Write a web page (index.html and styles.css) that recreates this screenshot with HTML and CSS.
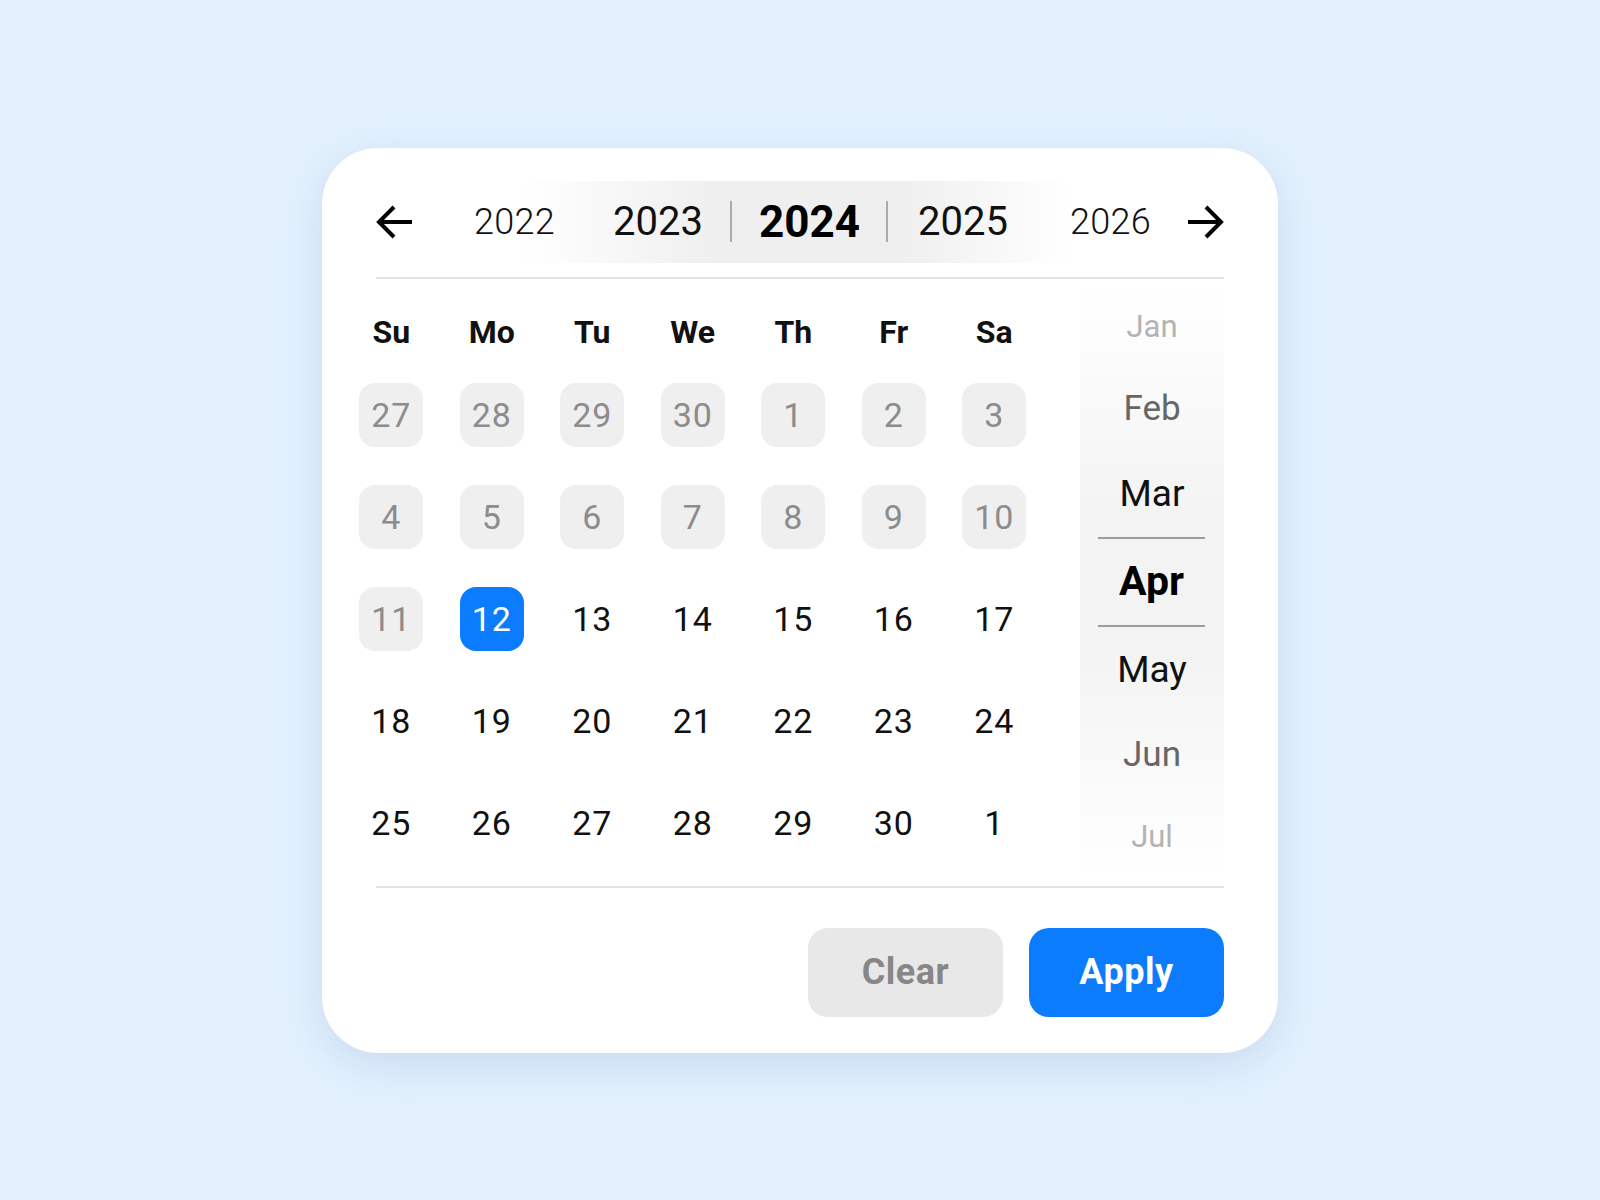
FILE: index.html
```html
<!DOCTYPE html>
<html>
<head>
<meta charset="utf-8">
<link rel="stylesheet" href="styles.css">
</head>
<body>
<div class="card">
  <div class="header">
    <svg class="arrow" width="38" height="34" viewBox="0 0 38 34"><path d="M36 17H3M18 2L3 17L18 32" fill="none" stroke="#000" stroke-width="4"/></svg>
    <span class="year far y2022">2022</span>
    <span class="year near y2023">2023</span>
    <span class="sep s1"></span>
    <span class="year cur">2024</span>
    <span class="sep s2"></span>
    <span class="year near y2025">2025</span>
    <span class="year far y2026">2026</span>
    <svg class="arrow right" width="38" height="34" viewBox="0 0 38 34"><path d="M2 17H35M20 2L35 17L20 32" fill="none" stroke="#000" stroke-width="4"/></svg>
  </div>
  <div class="divider"></div>
  <div class="body">
    <div class="grid">
      <div class="wd">Su</div><div class="wd">Mo</div><div class="wd">Tu</div><div class="wd">We</div><div class="wd">Th</div><div class="wd">Fr</div><div class="wd">Sa</div>
      <div class="day"><span class="cell muted">27</span></div>
      <div class="day"><span class="cell muted">28</span></div>
      <div class="day"><span class="cell muted">29</span></div>
      <div class="day"><span class="cell muted">30</span></div>
      <div class="day"><span class="cell muted">1</span></div>
      <div class="day"><span class="cell muted">2</span></div>
      <div class="day"><span class="cell muted">3</span></div>
      <div class="day"><span class="cell muted">4</span></div>
      <div class="day"><span class="cell muted">5</span></div>
      <div class="day"><span class="cell muted">6</span></div>
      <div class="day"><span class="cell muted">7</span></div>
      <div class="day"><span class="cell muted">8</span></div>
      <div class="day"><span class="cell muted">9</span></div>
      <div class="day"><span class="cell muted">10</span></div>
      <div class="day"><span class="cell muted">11</span></div>
      <div class="day"><span class="cell sel">12</span></div>
      <div class="day"><span class="cell">13</span></div>
      <div class="day"><span class="cell">14</span></div>
      <div class="day"><span class="cell">15</span></div>
      <div class="day"><span class="cell">16</span></div>
      <div class="day"><span class="cell">17</span></div>
      <div class="day"><span class="cell">18</span></div>
      <div class="day"><span class="cell">19</span></div>
      <div class="day"><span class="cell">20</span></div>
      <div class="day"><span class="cell">21</span></div>
      <div class="day"><span class="cell">22</span></div>
      <div class="day"><span class="cell">23</span></div>
      <div class="day"><span class="cell">24</span></div>
      <div class="day"><span class="cell">25</span></div>
      <div class="day"><span class="cell">26</span></div>
      <div class="day"><span class="cell">27</span></div>
      <div class="day"><span class="cell">28</span></div>
      <div class="day"><span class="cell">29</span></div>
      <div class="day"><span class="cell">30</span></div>
      <div class="day"><span class="cell">1</span></div>
    </div>
    <div class="months">
      <div class="m m-edge m-h80">Jan</div>
      <div class="m m-mid m-h84">Feb</div>
      <div class="m m-near m-h86">Mar</div>
      <div class="m m-cur">Apr</div>
      <div class="m m-near m-h86">May</div>
      <div class="m m-mid m-h84">Jun</div>
      <div class="m m-edge m-h80">Jul</div>
    </div>
  </div>
  <div class="divider bottom"></div>
  <div class="actions">
    <button class="btn clear">Clear</button>
    <button class="btn apply">Apply</button>
  </div>
</div>
</body>
</html>
```
FILE: styles.css
```css
html, body {
  margin: 0;
  padding: 0;
}
body {
  width: 1600px;
  height: 1200px;
  background: #e3f1fe;
  display: flex;
  align-items: center;
  justify-content: center;
  font-family: Roboto, "Noto Sans", sans-serif;
  color: #111;
}
.card {
  width: 956px;
  box-sizing: border-box;
  padding: 33px 54px 36px 54px;
  background: #fff;
  border-radius: 56px;
  box-shadow: 0 12px 44px rgba(90, 130, 185, 0.2);
}
.header {
  height: 82px;
  display: flex;
  align-items: center;
  background: linear-gradient(to right, rgba(240,240,240,0) 17%, #efefef 40%, #efefef 62%, rgba(240,240,240,0) 82%);
}
.arrow { display: block; flex: none; }
.arrow.right { margin-left: auto; }
.year { line-height: 1; color: #111; }
.far { font-size: 36px; font-weight: 300; letter-spacing: 0.3px; }
.near { font-size: 40px; font-weight: 400; }
.cur { font-size: 44px; font-weight: 700; margin-left: 27px; color: #000; }
.y2022 { margin-left: 60px; }
.y2023 { margin-left: 58px; }
.y2025 { margin-left: 30px; }
.y2026 { margin-left: 62px; }
.sep { width: 2px; height: 41px; background: #aaa; flex: none; }
.s1 { margin-left: 27px; }
.s2 { margin-left: 26px; }
.divider {
  height: 2px;
  background: #e2e2e2;
  margin-top: 14px;
}
.divider.bottom { margin-top: 9px; }
.body {
  display: flex;
  align-items: flex-start;
}
.grid {
  margin-left: -35px;
  padding-top: 21px;
  width: 703.5px;
  display: grid;
  grid-template-columns: repeat(7, 100.5px);
  grid-template-rows: 64px repeat(5, 102px);
}
.wd {
  display: flex;
  align-items: center;
  justify-content: center;
  font-size: 32px;
  font-weight: 700;
  color: #111;
}
.day {
  display: flex;
  align-items: center;
  justify-content: center;
}
.cell {
  width: 64px;
  height: 64px;
  border-radius: 16px;
  display: flex;
  align-items: center;
  justify-content: center;
  font-size: 34px;
  color: #111;
  letter-spacing: 1px;
}
.cell.muted { background: #efefef; color: #8c8c8c; }
.cell.sel { background: #0a7cfd; color: #fff; }
.months {
  margin-left: auto;
  margin-top: 8px;
  width: 144px;
  background: linear-gradient(to bottom, #fff 0%, #f3f3f3 40%, #f3f3f3 60%, #fff 100%);
  display: flex;
  flex-direction: column;
}
.m {
  display: flex;
  align-items: center;
  justify-content: center;
  line-height: 1;
}
.m-h80 { height: 80px; }
.m-h84 { height: 84px; }
.m-h86 { height: 86px; }
.m-edge { font-size: 31px; color: #b3b3b3; }
.m-mid { font-size: 35px; color: #666; }
.m-near { font-size: 37px; color: #111; }
.m-cur {
  height: 86px;
  margin: 0 19px 0 18px;
  border-top: 2px solid #9c9c9c;
  border-bottom: 2px solid #9c9c9c;
  font-size: 41px;
  font-weight: 700;
  color: #000;
}
.actions {
  margin-top: 40px;
  display: flex;
  justify-content: flex-end;
  gap: 26px;
}
.btn {
  width: 195px;
  height: 89px;
  border: none;
  border-radius: 20px;
  font-family: Roboto, "Noto Sans", sans-serif;
  font-size: 36px;
  font-weight: 700;
  letter-spacing: 0.5px;
}
.clear { background: #e8e8e8; color: #878787; }
.apply { background: #0a7cfd; color: #fff; }
```
